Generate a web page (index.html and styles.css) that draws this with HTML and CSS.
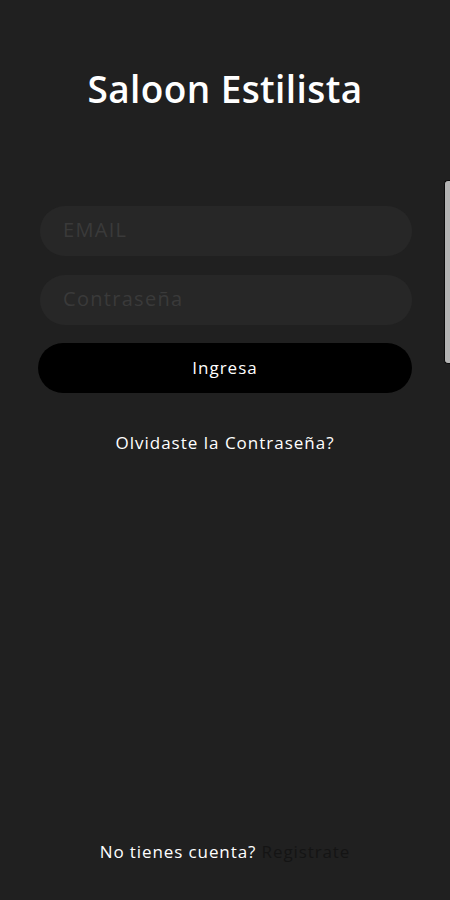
FILE: index.html
```html
<!DOCTYPE html>
<html lang="es">
<head>
    <meta charset="UTF-8">
    <meta name="viewport" content="width=device-width, initial-scale=1.0">
    <link rel="stylesheet" href="styles.css">
    <title>Saloon Estilista</title>
</head>
<body>
    <!-- Pantalla de login -->
    <div class="screen">
        <h1 class="title">Saloon Estilista</h1>

        <form class="login-form">
            <input type="text" class="field" placeholder="EMAIL">
            <input type="password" class="field" placeholder="Contraseña">
            <button type="button" class="btn">Ingresa</button>
        </form>

        <a href="#" class="forgot">Olvidaste la Contraseña?</a>

        <p class="register">No tienes cuenta? <a href="#" class="register-link">Registrate</a></p>

        <div class="scroll-thumb"></div>
    </div>
</body>
</html>
```

FILE: styles.css
```css
/* Estilos del login */
body {
    margin: 0;
    padding: 0;
    background-color: #202020;
    font-family: "Open Sans", "Liberation Sans", sans-serif;
}

.screen {
    position: relative;
    height: 900px;
    display: flex;
    flex-direction: column;
    align-items: center;
    box-sizing: border-box;
    padding-top: 63px;
}

.title {
    margin: 0;
    color: #ffffff;
    font-size: 37px;
    font-weight: 600;
    line-height: 52px;
    letter-spacing: 0.4px;
}

.login-form {
    margin-top: 91px;
    width: 374px;
    display: flex;
    flex-direction: column;
    gap: 19px;
}

.field {
    box-sizing: border-box;
    height: 50px;
    margin-left: 2px;
    border: none;
    border-radius: 25px;
    background-color: #272727;
    padding: 0 23px 4px;
    font-family: inherit;
    font-size: 20px;
    letter-spacing: 1.3px;
    color: #ddd;
    outline: none;
}

.field::placeholder {
    color: #3a3a3a;
}

.btn {
    height: 50px;
    margin-top: -1px;
    border: none;
    border-radius: 25px;
    background-color: #000000;
    color: #ffffff;
    font-family: inherit;
    font-size: 17px;
    font-weight: 500;
    letter-spacing: 1px;
    padding-bottom: 2px;
    cursor: pointer;
}

.forgot {
    margin-top: 38px;
    color: #ffffff;
    font-size: 17px;
    font-weight: 500;
    letter-spacing: 1px;
    text-decoration: none;
}

.register {
    margin: auto 0 37px;
    color: #ffffff;
    font-size: 17px;
    letter-spacing: 0.9px;
}

.register-link {
    color: #141414;
    text-decoration: none;
}

.scroll-thumb {
    position: absolute;
    right: 0;
    top: 180px;
    width: 5px;
    height: 182px;
    background-color: #b4b4b4;
    border: 1px solid #0c0c0c;
    border-right: none;
    border-radius: 4px 0 0 4px;
}
```
